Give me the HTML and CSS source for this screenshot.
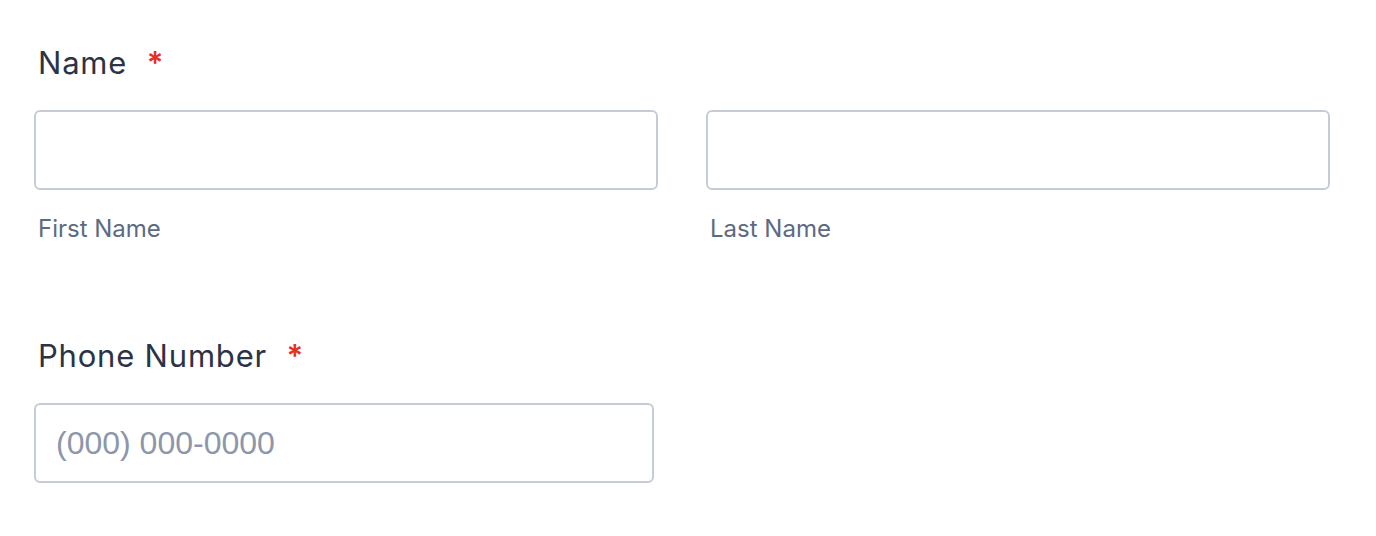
FILE: index.html
```html
<!DOCTYPE html>
<html lang="en">
<head>
    <meta charset="UTF-8">
    <title>Form</title>
    <link rel="stylesheet" href="styles.css">
</head>
<body>
    <div id="form">
        <div class="field">
            <label class="label">Name <span class="req">*</span></label>
            <div class="row">
                <div class="col">
                    <input class="input" type="text">
                    <div class="sub">First Name</div>
                </div>
                <div class="col">
                    <input class="input" type="text">
                    <div class="sub">Last Name</div>
                </div>
            </div>
        </div>
        <div class="field">
            <label class="label">Phone Number <span class="req">*</span></label>
            <div class="row">
                <div class="col phone">
                    <input class="input" type="tel" placeholder="(000) 000-0000">
                </div>
            </div>
        </div>
    </div>
</body>
</html>
```

FILE: styles.css
```css
* { box-sizing: border-box; }
html, body { overflow: hidden; }
body { margin: 0; background: #fff; font-family: Inter, "Noto Sans", sans-serif; }
#form { padding: 43px 46px 0 34px; }
.field { margin-bottom: 92px; }
.field:last-child { margin-bottom: 0; }
.label {
    display: block;
    padding-left: 4px;
    font-size: 31px; line-height: 40px;
    letter-spacing: 0.8px;
    color: #2c3345;
    margin-bottom: 27px;
}
.req { color: #e5311f; margin-left: 10px; font-weight: 600; }
.row { display: flex; gap: 48px; }
.col { flex: 1; }
.phone { flex: 0 0 620px; }
.input {
    display: block;
    width: 100%; height: 80px;
    border: 2px solid #c6cbd8;
    border-radius: 6px;
    padding: 0 20px;
    font-family: "Liberation Sans", Arial, sans-serif;
    font-size: 32px;
    color: #2c3345;
    outline: none;
}
.input::placeholder { color: #8c97ab; }
.sub {
    padding-left: 4px;
    margin-top: 24px;
    font-size: 24px; line-height: 30px;
    color: #5d6a82;
}
```
